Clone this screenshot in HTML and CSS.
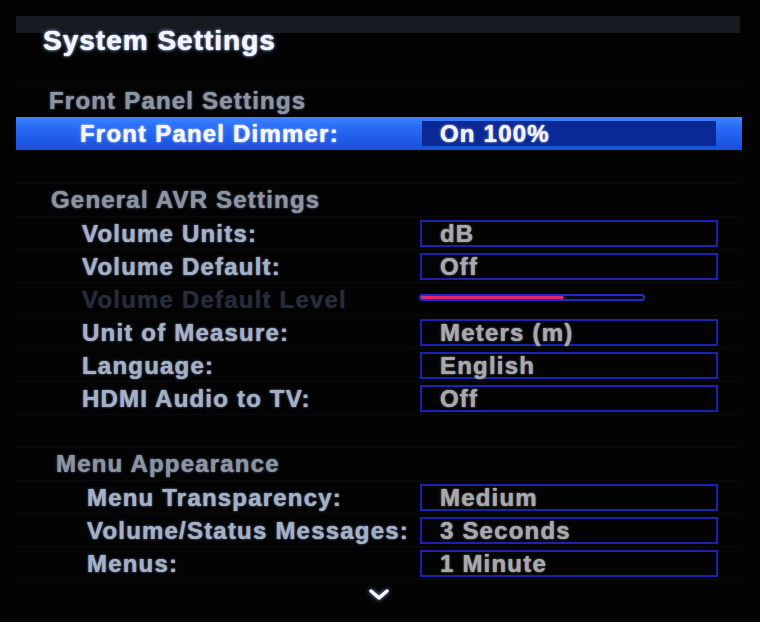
FILE: index.html
```html
<!DOCTYPE html>
<html>
<head>
<meta charset="utf-8">
<link rel="stylesheet" href="styles.css">
</head>
<body>
<div class="screen">
  <header class="header">
    <h1 class="title">System Settings</h1>
  </header>
  <div class="menu">
    <div class="row heading">Front Panel Settings</div>
    <div class="row item selected">
      <span class="label">Front Panel Dimmer:</span>
      <span class="value">On 100%</span>
    </div>
    <div class="row blank"></div>

    <div class="row heading h2">General AVR Settings</div>
    <div class="row item s2">
      <span class="label">Volume Units:</span>
      <span class="value">dB</span>
    </div>
    <div class="row item s2">
      <span class="label">Volume Default:</span>
      <span class="value">Off</span>
    </div>
    <div class="row item s2 disabled">
      <span class="label">Volume Default Level</span>
      <span class="slider"><span class="slider-fill" style="width:64%"></span></span>
    </div>
    <div class="row item s2">
      <span class="label">Unit of Measure:</span>
      <span class="value">Meters (m)</span>
    </div>
    <div class="row item s2">
      <span class="label">Language:</span>
      <span class="value">English</span>
    </div>
    <div class="row item s2">
      <span class="label">HDMI Audio to TV:</span>
      <span class="value">Off</span>
    </div>
    <div class="row blank"></div>

    <div class="row heading h3">Menu Appearance</div>
    <div class="row item s3">
      <span class="label">Menu Transparency:</span>
      <span class="value">Medium</span>
    </div>
    <div class="row item s3">
      <span class="label">Volume/Status Messages:</span>
      <span class="value">3 Seconds</span>
    </div>
    <div class="row item s3">
      <span class="label">Menus:</span>
      <span class="value">1 Minute</span>
    </div>
    <div class="row more">
      <svg class="chevron" width="22" height="14" viewBox="0 0 22 14">
        <polyline points="3,3 11,10 19,3" fill="none" stroke="#f4f8ff" stroke-width="3.5" stroke-linecap="round" stroke-linejoin="round"/>
      </svg>
    </div>
  </div>
</div>
</body>
</html>
```

FILE: styles.css
```css
html, body {
  margin: 0;
  padding: 0;
  background: #030304;
}

body {
  width: 760px;
  height: 622px;
  overflow: hidden;
  font-family: "Liberation Sans", Arial, sans-serif;
  font-weight: bold;
}

.screen {
  padding: 16px 18px 0 16px;
}

.header {
  height: 50px;
  background: linear-gradient(to bottom, #161a21 0, #161a21 17px, transparent 17px);
  margin-right: 2px;
}

.title {
  margin: 0;
  padding: 8px 0 0 27px;
  font-size: 28px;
  line-height: 34px;
  letter-spacing: 1px;
  color: #f2f5fc;
  text-shadow: 0 0 1px #ffffff, 0 0 3px #9fb6e0, 0 0 5px rgba(120, 150, 210, 0.6);
}

.menu {
  margin-top: 18px;
  display: flex;
  flex-direction: column;
}

.row {
  height: 33px;
  box-sizing: border-box;
  border-top: 1px solid #090a0d;
  font-size: 24px;
  letter-spacing: 1.2px;
  line-height: 31px;
}

.heading {
  padding-left: 33px;
  color: #8b94a2;
  text-shadow: 0 0 1px #8b94a2, 0 0 3px rgba(120, 135, 160, 0.6);
}

.heading.h2 { padding-left: 35px; }
.heading.h3 { padding-left: 40px; }

.item {
  display: grid;
  grid-template-columns: 404px 298px;
  align-items: center;
}

.label {
  padding-left: 64px;
  white-space: nowrap;
  color: #a4b0c6;
  text-shadow: 0 0 1px #a4b0c6, 0 0 3px rgba(150, 170, 205, 0.55);
}

.s2 .label { padding-left: 66px; }
.s3 .label { padding-left: 71px; }

.value {
  box-sizing: border-box;
  height: 27px;
  border: 2px solid #1a22b4;
  padding-left: 18px;
  line-height: 23px;
  white-space: nowrap;
  color: #a7a9ae;
  text-shadow: 0 0 1px #a7a9ae, 0 0 3px rgba(160, 165, 175, 0.5);
}

.selected {
  border-top: none;
  background: linear-gradient(to bottom, #3a86ff 0, #2a6cf6 30%, #1f5ae8 70%, #1a4fd8 100%);
}

.selected .label {
  color: #f4f7ff;
  text-shadow: 0 0 1px #ffffff, 0 0 3px rgba(220, 230, 255, 0.7);
}

.selected .value {
  margin-left: 2px;
  width: 294px;
  height: 25px;
  border: none;
  background: #0b2994;
  color: #f0f3fb;
  line-height: 25px;
  text-shadow: 0 0 1px #ffffff, 0 0 3px rgba(220, 230, 255, 0.6);
}

.disabled .label {
  color: #262c38;
  text-shadow: 0 0 1px #262c38;
}

.slider {
  display: block;
  box-sizing: border-box;
  width: 226px;
  height: 7px;
  margin-left: -1px;
  margin-top: -4px;
  border: 2px solid #1c2ad0;
  border-radius: 3px;
  background: #05051a;
  overflow: hidden;
}

.slider-fill {
  display: block;
  height: 100%;
  background: #e0286c;
  box-shadow: 0 0 2px #ff4d8a;
}

.more {
  display: flex;
  justify-content: center;
  padding-top: 8px;
}

.chevron {
  filter: drop-shadow(0 0 2px rgba(170, 200, 255, 0.8));
}
```
